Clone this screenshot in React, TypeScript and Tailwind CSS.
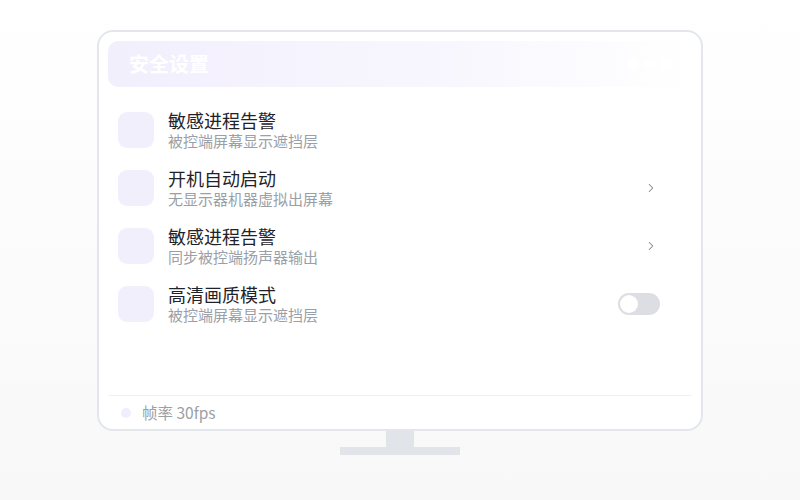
import { ChevronRight } from "lucide-react";

const rows = [
  { title: "敏感进程告警", desc: "被控端屏幕显示遮挡层", action: "none" },
  { title: "开机自动启动", desc: "无显示器机器虚拟出屏幕", action: "chevron" },
  { title: "敏感进程告警", desc: "同步被控端扬声器输出", action: "chevron" },
  { title: "高清画质模式", desc: "被控端屏幕显示遮挡层", action: "toggle" },
];

const App = () => {
  return (
    <div
      className="w-[800px] h-[500px] bg-gradient-to-b from-white to-[#f8f8f9] flex flex-col items-center pt-[30px]"
      style={{ fontFamily: '"Noto Sans CJK SC", "Noto Sans", sans-serif' }}
    >
      {/* Monitor */}
      <div className="w-[606px] h-[401px] rounded-[16px] border-2 border-[#e3e6eb] bg-white px-[9px] pt-[9px] pb-0 flex flex-col">
        {/* Header */}
        <div className="h-[46px] rounded-[10px] bg-gradient-to-r from-[#f2effd] via-[#f8f7fe] via-60% to-white/0 flex items-center justify-between pl-[21px] pr-[19px]">
          <span className="text-white text-[20px] font-bold leading-none">安全设置</span>
          <div className="flex gap-[5px]">
            <span className="w-[12px] h-[12px] rounded-full bg-white" />
            <span className="w-[12px] h-[12px] rounded-full bg-white" />
            <span className="w-[12px] h-[12px] rounded-full bg-white" />
          </div>
        </div>

        {/* Rows */}
        <div className="flex flex-col gap-[22px] mt-[25px] pl-[10px] pr-[32px]">
          {rows.map((r, i) => (
            <div key={i} className="flex items-center h-[36px]">
              <div className="w-[36px] h-[36px] rounded-[9px] bg-[#f2effd] shrink-0" />
              <div className="ml-[14px] flex flex-col flex-1">
                <span className="text-[18px] leading-[22px] text-[#1f2329]">{r.title}</span>
                <span className="text-[15px] leading-[20px] text-[#9aa0a8]">{r.desc}</span>
              </div>
              {r.action === "chevron" && (
                <ChevronRight className="w-[14px] h-[14px] text-[#7d838c] mr-[2px]" strokeWidth={1.75} />
              )}
              {r.action === "toggle" && (
                <div className="w-[42px] h-[22px] rounded-full bg-[#dcdee3] flex items-center px-[2px]">
                  <span className="w-[18px] h-[18px] rounded-full bg-white" />
                </div>
              )}
            </div>
          ))}
        </div>

        {/* Footer */}
        <div className="mt-auto border-t border-[#eef0f3] h-[34px] flex items-center pl-[13px]">
          <span className="w-[10px] h-[10px] rounded-full bg-[#f0edfd]" />
          <span className="ml-[11px] text-[15.5px] text-[#9aa0a8]">帧率 30fps</span>
        </div>
      </div>

      {/* Stand */}
      <div className="w-[28px] h-[16px] bg-[#e1e4e8]" />
      <div className="w-[120px] h-[8px] bg-[#e1e4e8]" />
    </div>
  );
};

export default App;
